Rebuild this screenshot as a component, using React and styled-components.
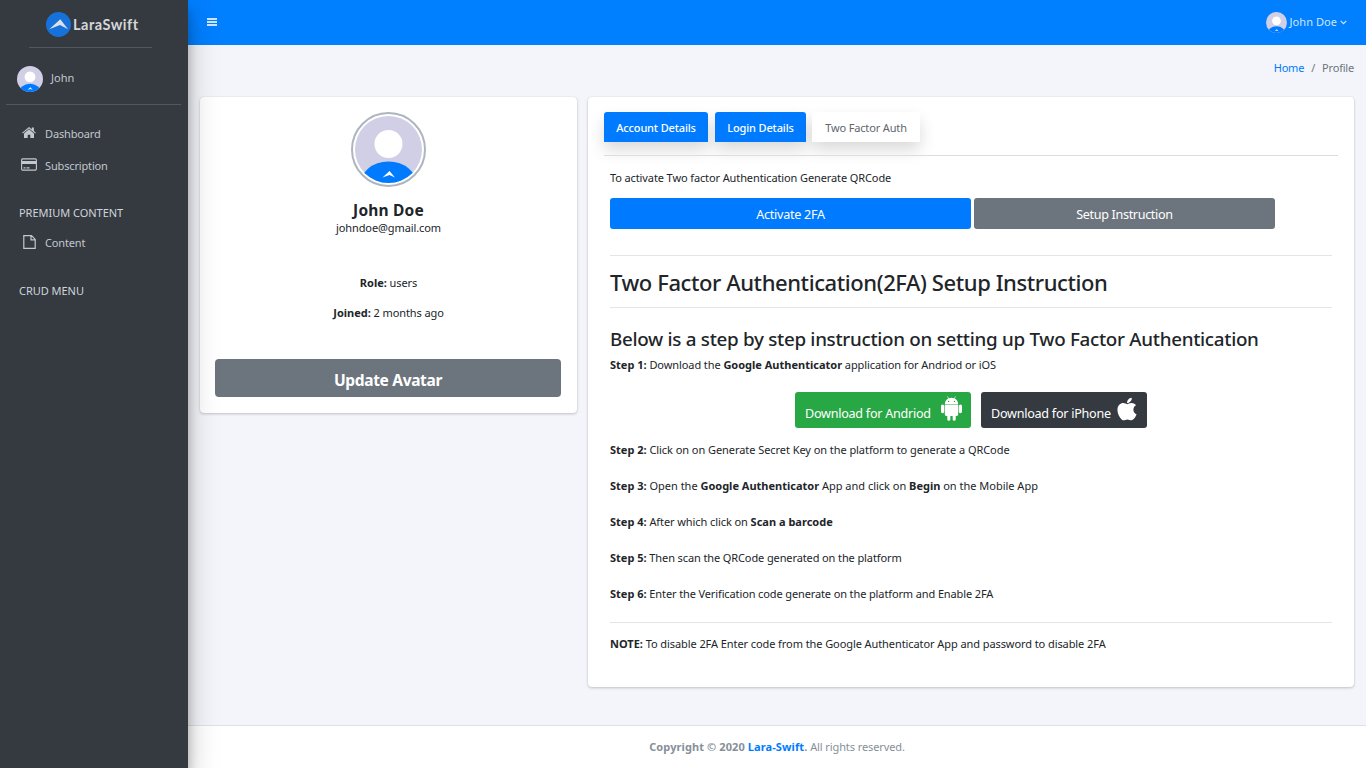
import React from 'react';
import styled, { createGlobalStyle } from 'styled-components';
import { FaApple } from 'react-icons/fa';

const GlobalStyle = createGlobalStyle`
  *, *::before, *::after { box-sizing: border-box; }
  body {
    margin: 0;
    overflow: hidden;
    background: #f4f5fa;
    color: #212529;
    font-family: "Segoe UI", "Noto Sans", "Open Sans", sans-serif;
    font-size: 11px;
    line-height: 17px;
    letter-spacing: -0.07px;
  }
  a { color: #007bff; text-decoration: none; }
  b { font-weight: 700; letter-spacing: 0; }
  svg { display: block; flex: none; }
`;

const Page = styled.div`
  display: flex;
  width: 1366px;
  height: 768px;
`;

const Sidebar = styled.aside`
  position: relative;
  z-index: 2;
  flex: none;
  width: 188px;
  display: flex;
  flex-direction: column;
  background: #343a40;
  color: #c2c7d0;
  box-shadow: 0 14px 28px rgba(0, 0, 0, 0.25), 0 10px 10px rgba(0, 0, 0, 0.22);
`;

const Brand = styled.a`
  display: flex;
  align-items: center;
  gap: 2px;
  height: 35px;
  margin: 12px 36px 0 29px;
  padding: 0 0 10px 17px;
  color: #d4d7da;
  font-family: "Century Gothic", Lato, sans-serif;
  font-size: 14.5px;
  font-weight: 700;
  letter-spacing: 0.5px;
`;

const SideRule = styled.div`
  height: 1px;
  margin: 0 ${(p) => p.$right}px 0 ${(p) => p.$left}px;
  background: #4f5962;
`;

const UserPanel = styled.div`
  display: flex;
  align-items: center;
  gap: 8px;
  height: 27px;
  margin: 17px 0 12px 17px;
  letter-spacing: 0.05px;

  span { padding-bottom: 2px; }
`;

const Nav = styled.nav`
  display: flex;
  flex-direction: column;
  padding-top: 12px;
`;

const NavLink = styled.a`
  display: flex;
  align-items: center;
  height: 32px;
  padding-left: 20px;
  color: #c2c7d0;
  letter-spacing: -0.15px;
`;

const NavIcon = styled.span`
  display: flex;
  justify-content: center;
  width: 18px;
  margin: -1px 7px 0 0;
`;

const NavHeader = styled.div`
  height: 17px;
  margin: ${(p) => p.$top}px 0 ${(p) => p.$bottom}px 19px;
  color: #d0d4db;
  letter-spacing: -0.03px;
`;

const Main = styled.div`
  flex: 1;
  display: flex;
  flex-direction: column;
`;

const Topbar = styled.header`
  display: flex;
  align-items: center;
  justify-content: space-between;
  height: 45px;
  padding: 0 19px 1px;
  background: #007fff;
  color: #cfe5ff;
`;

const Account = styled.div`
  display: flex;
  align-items: center;
  gap: 3px;
  letter-spacing: 0.06px;

  span { padding-bottom: 1px; }
`;

const Breadcrumb = styled.div`
  display: flex;
  justify-content: flex-end;
  gap: 7px;
  height: 17px;
  margin: 14px 12px 21px;
  color: #6c757d;
  letter-spacing: -0.2px;
`;

const Cards = styled.main`
  flex: 1;
  display: flex;
  align-items: flex-start;
  gap: 11px;
  padding: 0 12px;
`;

const Card = styled.section`
  display: flex;
  flex-direction: column;
  width: ${(p) => p.$width}px;
  height: ${(p) => p.$height}px;
  padding: 15px ${(p) => p.$side}px;
  background: #fff;
  border-radius: 4px;
  box-shadow: 0 0 1px rgba(0, 0, 0, 0.125), 0 1px 3px rgba(0, 0, 0, 0.2);
`;

const AvatarRing = styled.div`
  align-self: center;
  width: 75px;
  height: 75px;
  padding: 2px;
  border: 2px solid #adb5bd;
  border-radius: 50%;
`;

const Name = styled.h3`
  height: 24px;
  margin: 11px 0 0;
  font-size: 15.5px;
  line-height: 24px;
  font-weight: 700;
  letter-spacing: 0.2px;
  text-align: center;
`;

const Centered = styled.div`
  margin-top: ${(p) => p.$top}px;
  text-align: center;
  letter-spacing: -0.1px;
`;

const Button = styled.button`
  display: flex;
  align-items: center;
  justify-content: center;
  width: ${(p) => p.$width}px;
  height: ${(p) => p.$height || 31}px;
  padding: 2px 0 0;
  border: 0;
  border-radius: 3px;
  background: ${(p) => p.$color};
  color: #fff;
  font-family: inherit;
  font-size: 12.6px;
  font-weight: 400;
  letter-spacing: ${(p) => p.$track || -0.26}px;
`;

const AvatarButton = styled(Button)`
  margin-top: 38px;
  padding-top: 3px;
  border-radius: 4px;
  font-size: 15.5px;
  font-weight: 700;
`;

const DownloadButton = styled(Button)`
  justify-content: space-between;
  padding: 0 ${(p) => p.$right}px 0 10px;

  span { padding-top: 6px; }
  svg { margin-bottom: 3px; }
`;

const Tabs = styled.div`
  display: flex;
  height: 30px;
`;

const Tab = styled.a`
  display: flex;
  align-items: center;
  justify-content: center;
  width: ${(p) => p.$width}px;
  margin-right: ${(p) => p.$gap || 0}px;
  padding-top: 1px;
  border-radius: 3px 3px 0 0;
  background: ${(p) => (p.$current ? '#fff' : '#007bff')};
  color: ${(p) => (p.$current ? '#5f666d' : '#fff')};
  font-weight: ${(p) => (p.$current ? 400 : 500)};
  letter-spacing: -0.15px;
  box-shadow: 0 8px 16px rgba(0, 0, 0, 0.15);
`;

const Rule = styled.div`
  flex: none;
  height: 1px;
  margin-top: ${(p) => p.$top}px;
  background: ${(p) => p.$color || '#e5e5e5'};
`;

const TabPane = styled.div`
  display: flex;
  flex-direction: column;
  padding: 0 6px;
`;

const Line = styled.div`
  height: 17px;
  margin-top: ${(p) => p.$top}px;
  white-space: nowrap;
  letter-spacing: ${(p) => p.$track ?? -0.08}px;
`;

const Buttons = styled.div`
  display: flex;
  justify-content: ${(p) => p.$align || 'flex-start'};
  gap: ${(p) => p.$gap}px;
  margin-top: ${(p) => p.$top}px;
`;

const Title = styled.h1`
  height: 26px;
  margin: 13px 0 0;
  font-size: 22px;
  line-height: 26px;
  font-weight: 500;
  letter-spacing: -0.41px;
  white-space: nowrap;
`;

const Subtitle = styled.h2`
  height: 24px;
  margin: 19px 0 0;
  font-size: 18.8px;
  line-height: 24px;
  font-weight: 500;
  letter-spacing: -0.29px;
  white-space: nowrap;
`;

const Footer = styled.footer`
  height: 43px;
  padding-top: 12px;
  border-top: 1px solid #dee2e6;
  background: #fff;
  color: #869099;
  text-align: center;

  b { letter-spacing: 0.1px; }
  span { letter-spacing: -0.1px; }
`;

function Avatar({ size, id }) {
  return (
    <svg width={size} height={size} viewBox="0 0 67 67">
      <clipPath id={id}>
        <circle cx="33.5" cy="33.5" r="33.5" />
      </clipPath>
      <g clipPath={`url(#${id})`}>
        <rect width="67" height="67" fill="#d0cfe6" />
        <circle cx="33.5" cy="28" r="14" fill="#fff" />
        <ellipse cx="33.5" cy="70" rx="29" ry="24.500" fill="#007bff" />
        <path d="M27.5 61.500 34.500 55 40 61.500 34.500 59z" fill="#fff" />
      </g>
    </svg>
  );
}

function LogoMark() {
  return (
    <svg width="25" height="25" viewBox="0 0 25 25">
      <circle cx="12.5" cy="12.5" r="12.5" fill="#1672da" />
      <path d="M3.3 17.2 14.3 7.3 22 17.2 14 13.1z" fill="#dde1e6" />
    </svg>
  );
}

function HomeIcon() {
  return (
    <svg width="14" height="13" viewBox="0 0 14 13" fill="currentColor">
      <path d="M7 .9 9.800 3.300V1.600h2.100v3.500L13.900 6.800 13.200 7.600 7 2.400.8 7.600.1 6.800z" />
      <path d="M7 3.300 12 7.500v4.600H8.300V8.700H5.700v3.400H2V7.500z" />
    </svg>
  );
}

function CardIcon() {
  return (
    <svg width="16" height="13" viewBox="0 0 16 13">
      <rect x=".6" y=".9" width="14.8" height="11.2" rx="1" fill="none" stroke="currentColor" strokeWidth="1.1" />
      <path d="M1 3h14v3H1zM2.500 9.300h2v1.100h-2zM5.500 9.300h3v1.100h-3z" fill="currentColor" />
    </svg>
  );
}

function FileIcon() {
  return (
    <svg width="13" height="14" viewBox="0 0 13 14" fill="none" stroke="currentColor" strokeWidth="1.2">
      <path d="M.8.7h7.700L12.200 4.400V13.300H.8zM8 .7v4.200h4.200" />
    </svg>
  );
}

function BarsIcon() {
  return (
    <svg width="10" height="8" viewBox="0 0 10 8" fill="currentColor">
      <path d="M0 0h10v2H0zM0 3h10v2H0zM0 6h10v2H0z" />
    </svg>
  );
}

function ChevronIcon() {
  return (
    <svg width="7" height="5" viewBox="0 0 7 5">
      <path d="M.7.8 3.5 3.6 6.3.8" fill="none" stroke="currentColor" strokeWidth="1.2" />
    </svg>
  );
}

function AndroidIcon() {
  return (
    <svg width="21" height="25" viewBox="0 0 22 26" fill="#fff">
      <path
        fillRule="evenodd"
        d="M4 8.3C4.2 5.4 5.8 3.6 7.7 2.6L6.4.5l.5-.3 1.3 2.1a8 8 0 0 1 5.6 0L15.100.2l.5.3-1.300 2.100C16.200 3.600 17.800 5.400 18 8.300zM7.900 4.900a.7.7 0 1 0 0 1.400.7.7 0 0 0 0-1.400zm6.200 0a.7.7 0 1 0 0 1.400.7.7 0 0 0 0-1.400z"
      />
      <path d="M4 8.900h14v10.400a1.500 1.500 0 0 1-1.500 1.500h-1.100v3.400a1.600 1.600 0 0 1-3.200 0v-3.400H9.800v3.400a1.600 1.600 0 0 1-3.200 0v-3.400H5.500A1.500 1.500 0 0 1 4 19.300z" />
      <rect x="0" y="8.700" width="3.400" height="9.200" rx="1.700" />
      <rect x="18.600" y="8.700" width="3.400" height="9.200" rx="1.700" />
    </svg>
  );
}

const steps = [
  { track: -0.06, body: <>Click on on Generate Secret Key on the platform to generate a QRCode</> },
  { track: -0.01, body: <>Open the <b>Google Authenticator</b> App and click on <b>Begin</b> on the Mobile App</> },
  { track: -0.08, body: <>After which click on <b>Scan a barcode</b></> },
  { track: -0.11, body: <>Then scan the QRCode generated on the platform</> },
  { track: -0.12, body: <>Enter the Verification code generate on the platform and Enable 2FA</> },
];

export default function App() {
  return (
    <Page>
      <GlobalStyle />
      <Sidebar>
        <Brand>
          <LogoMark />
          LaraSwift
        </Brand>
        <SideRule $left={29} $right={36} />
        <UserPanel>
          <Avatar size={26} id="avatar-side" />
          <span>John</span>
        </UserPanel>
        <SideRule $left={6} $right={7} />
        <Nav>
          <NavLink><NavIcon><HomeIcon /></NavIcon>Dashboard</NavLink>
          <NavLink><NavIcon><CardIcon /></NavIcon>Subscription</NavLink>
          <NavHeader $top={23} $bottom={5}>PREMIUM CONTENT</NavHeader>
          <NavLink><NavIcon><FileIcon /></NavIcon>Content</NavLink>
          <NavHeader $top={24} $bottom={0}>CRUD MENU</NavHeader>
        </Nav>
      </Sidebar>
      <Main>
        <Topbar>
          <BarsIcon />
          <Account>
            <Avatar size={21} id="avatar-top" />
            <span>John Doe</span>
            <ChevronIcon />
          </Account>
        </Topbar>
        <Breadcrumb>
          <a>Home</a>
          <span>/</span>
          <span>Profile</span>
        </Breadcrumb>
        <Cards>
          <Card $width={377} $height={316} $side={15}>
            <AvatarRing>
              <Avatar size={67} id="avatar-card" />
            </AvatarRing>
            <Name>John Doe</Name>
            <Centered $top={-3}>johndoe@gmail.com</Centered>
            <Centered $top={38}><b>Role:</b> users</Centered>
            <Centered $top={13}><b>Joined:</b> 2 months ago</Centered>
            <AvatarButton $width={346} $height={38} $color="#6c757d" $track={-0.33}>Update Avatar</AvatarButton>
          </Card>
          <Card $width={766} $height={590} $side={16}>
            <Tabs>
              <Tab $width={104} $gap={7}>Account Details</Tab>
              <Tab $width={91} $gap={6}>Login Details</Tab>
              <Tab $width={108} $current>Two Factor Auth</Tab>
            </Tabs>
            <Rule $top={13} $color="#dcdddf" />
            <TabPane>
              <Line $top={13} $track={-0.11}>To activate Two factor Authentication Generate QRCode</Line>
              <Buttons $gap={3} $top={12}>
                <Button $width={361} $color="#007bff">Activate 2FA</Button>
                <Button $width={301} $color="#6c757d" $track={-0.34}>Setup Instruction</Button>
              </Buttons>
              <Rule $top={26} />
              <Title>Two Factor Authentication(2FA) Setup Instruction</Title>
              <Rule $top={12} />
              <Subtitle>Below is a step by step instruction on setting up Two Factor Authentication</Subtitle>
              <Line $top={5}>
                <b>Step 1:</b> Download the <b>Google Authenticator</b> application for Andriod or iOS
              </Line>
              <Buttons $gap={10} $top={19} $align="center">
                <DownloadButton $width={176} $height={36} $right={9} $color="#28a745">
                  <span>Download for Andriod</span>
                  <AndroidIcon />
                </DownloadButton>
                <DownloadButton $width={166} $height={36} $right={7} $color="#343a40">
                  <span>Download for iPhone</span>
                  <FaApple size={26} />
                </DownloadButton>
              </Buttons>
              {steps.map((step, i) => (
                <Line key={i} $top={i === 0 ? 13 : 19} $track={step.track}>
                  <b>Step {i + 2}:</b> {step.body}
                </Line>
              ))}
              <Rule $top={20} />
              <Line $top={12}>
                <b>NOTE:</b> To disable 2FA Enter code from the Google Authenticator App and password to disable 2FA
              </Line>
            </TabPane>
          </Card>
        </Cards>
        <Footer>
          <b>Copyright © 2020 <a>Lara-Swift</a>.</b> <span>All rights reserved.</span>
        </Footer>
      </Main>
    </Page>
  );
}
